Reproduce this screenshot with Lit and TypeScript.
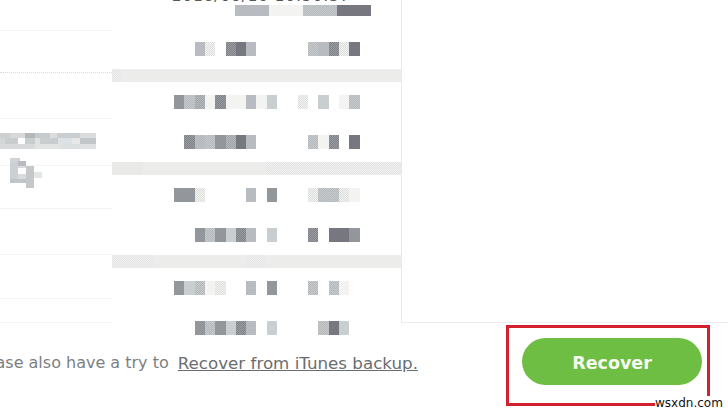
import { LitElement, html, css, svg } from "lit";
import { customElement } from "lit/decorators.js";

type Seg = [number, string];
const ORIGIN = 112;

/** Each list: [end x, shade] pairs, walking right from x=112. Empty shade leaves a gap. */
const ROWS: Seg[][] = [
  [[235, ""], [269, "a"], [303, "f"], [337, "g"], [371, "x"]],
  [[195, ""], [205, "a"], [215, "h"], [226, ""], [236, "k"], [246, "x"], [256, "a"], [308, ""], [318, "g"], [329, "a"], [339, "k"], [349, "h"], [360, "x"]],
  [[174, ""], [184, "d"], [195, "g"], [205, "c"], [215, "f"], [226, "k"], [236, "f"], [246, "f"], [256, "a"], [267, "f"], [277, "e"], [298, ""], [308, "h"], [318, ""], [329, "e"], [339, ""], [349, "f"], [360, "g"]],
  [[184, ""], [195, "k"], [205, "a"], [215, "g"], [226, "d"], [236, "c"], [246, "x"], [256, "a"], [308, ""], [318, "g"], [329, "f"], [339, "k"], [349, ""], [360, "x"]],
  [[174, ""], [195, "d"], [205, "h"], [246, ""], [256, "a"], [267, ""], [277, "d"], [308, ""], [318, "h"], [329, "g"], [339, "g"], [349, "h"], [360, "f"]],
  [[195, ""], [205, "d"], [215, "g"], [226, "d"], [236, "e"], [246, "k"], [256, "a"], [267, ""], [277, "e"], [308, ""], [318, "k"], [329, ""], [349, "x"], [360, "d"]],
  [[174, ""], [184, "d"], [195, "e"], [205, "g"], [215, "f"], [226, "h"], [246, ""], [256, "a"], [267, ""], [277, "d"], [308, ""], [318, "g"], [329, ""], [339, "g"], [349, "f"]],
  [[195, ""], [205, "d"], [215, "g"], [226, "d"], [236, "e"], [246, "k"], [256, "a"], [267, ""], [277, "e"], [318, ""], [329, "g"], [339, "x"], [349, "e"]],
];

const BANDS: Seg[][] = [
  [[122, "n"], [401, "b"]],
  [[142, "m"], [266, "b"], [401, "n"]],
  [[153, "n"], [246, "b"], [265, "n"], [401, "b"]],
];

/** Row heights of the left list; each row ends in a hairline. */
const LEFT_ROWS = [31, 42, 46, 47, 43, 46, 44, 24];

const NAME_BLOCKS: [number, number, number, number, string][] = [
  [0, 133, 10, 5, "#ccd0d2"], [10, 133, 15, 5, "#d8d8d8"], [25, 133, 10, 5, "#b4b7bb"], [35, 133, 15, 5, "#c8cbce"],
  [50, 133, 7, 5, "#dcdcdc"], [57, 133, 23, 5, "#cbced0"], [80, 133, 16, 5, "#dadcdd"],
  [0, 138, 5, 6, "#d3d5d6"], [5, 138, 13, 6, "#c9cccd"], [18, 138, 7, 6, "#ffffff"], [25, 138, 10, 6, "#c9cccd"],
  [35, 138, 5, 6, "#e0e2dd"], [40, 138, 18, 6, "#cacdcf"], [58, 138, 14, 6, "#dbe1e4"], [72, 138, 8, 6, "#e6e8ea"], [80, 138, 16, 6, "#c2c6c9"],
  [0, 144, 35, 5, "#d8dadb"], [35, 144, 25, 5, "#e2e4e4"], [60, 144, 20, 5, "#dcdfe0"], [80, 144, 16, 5, "#dfe1e2"],
  [10, 158, 10, 5, "#d0d3d5"], [18, 161, 8, 5, "#b8bbbf"], [10, 163, 8, 17, "#cdd0d2"], [18, 166, 8, 2, "#d8dadc"],
  [18, 174, 8, 5, "#d8dadc"], [26, 166, 8, 22, "#c4c8cb"], [34, 172, 8, 6, "#e4e6e6"], [10, 179, 16, 4, "#c2c5c8"],
];

@customElement("seg-row")
class SegRow extends LitElement {
  static properties = { segs: { attribute: false } };
  segs: Seg[] = [];
  static styles = css`
    :host { display: flex; }
    i { display: block; height: 100%; flex: none; }
    .a { background: #b8bcc0; }
    .x { background: #76777f; }
    .d { background: #93979b; }
    .e { background: #c9ced1; }
    .f { background: #f3f4f2; }
    .b { background: #ecedeb; }
    .g { background: repeating-conic-gradient(#b4b8bb 0 25%, #c8cbcd 0 50%) 0 0 / 2px 2px; }
    .c { background: repeating-conic-gradient(#9fa3a7 0 25%, #b6babd 0 50%) 0 0 / 2px 2px; }
    .k { background: repeating-conic-gradient(#7f8186 0 25%, #9a9da1 0 50%) 0 0 / 2px 2px; }
    .h { background: repeating-conic-gradient(#dcdedc 0 25%, #f2f3f2 0 50%) 0 0 / 2px 2px; }
    .n { background: repeating-conic-gradient(#e2e3e2 0 25%, #f0f1f0 0 50%) 0 0 / 2px 2px; }
    .m { background: #e9eae8; }
  `;
  render() {
    let x = ORIGIN;
    return this.segs.map(([end, cls]) => {
      const w = end - x;
      x = end;
      return html`<i class=${cls} style="width:${w}px"></i>`;
    });
  }
}

@customElement("app-root")
export class AppRoot extends LitElement {
  static styles = css`
    :host {
      display: block;
      width: 728px;
      height: 415px;
      overflow: hidden;
      background: #fff;
      position: relative;
      font-family: "DejaVu Sans", sans-serif;
    }
    .main { display: flex; height: 323px; }
    .left { width: 112px; flex: none; position: relative; }
    .lrow { box-sizing: border-box; border-bottom: 1px solid #f2f4f5; }
    .lrow.dotted { border-bottom: 1px dotted #d9dadb; }
    .blur { position: absolute; left: 0; top: 0; width: 112px; height: 200px; }
    .mid { width: 289px; flex: none; display: flex; flex-direction: column; }
    .clip {
      height: 5px;
      flex: none;
      overflow: hidden;
      padding-left: 60px;
    }
    .clip span {
      display: block;
      margin-top: -12px;
      font-size: 15px;
      line-height: 16px;
      letter-spacing: 1.05px;
      color: #555;
      white-space: nowrap;
    }
    .r0 { height: 11px; flex: none; margin-bottom: 26px; }
    .r { height: 14px; flex: none; }
    .first { margin-top: 13px; margin-bottom: 26px; }
    .last { margin-bottom: 13px; }
    .tail { margin-bottom: 13px; }
    .band { height: 13px; flex: none; }
    .right {
      flex: 1;
      border-left: 1px solid #e8e9e9;
      border-bottom: 1px solid #eceded;
    }
    .foot { display: flex; height: 92px; }
    .msg {
      width: 506px;
      flex: none;
      box-sizing: border-box;
      padding: 28px 88px 0 0;
      display: flex;
      justify-content: flex-end;
      gap: 9px;
      white-space: nowrap;
      font-size: 16.7px;
      line-height: 24px;
      color: #7c7f82;
    }
    .msg span { font-size: 16px; }
    .msg a { color: #6a6d70; text-decoration: underline; }
    .mark {
      margin-top: 2px;
      width: 204px;
      height: 81px;
      box-sizing: border-box;
      border: 3px solid #d3202e;
      padding: 10px 5px 0 13px;
    }
    button {
      display: block;
      width: 180px;
      height: 47px;
      border: none;
      border-radius: 24px;
      background: #6fbe44;
      color: #f6faf2;
      font: bold 17.5px "DejaVu Sans", sans-serif;
      padding: 3px 0 0;
    }
    .wm {
      position: absolute;
      left: 655px;
      top: 396px;
      font: 12px/15px "DejaVu Sans", sans-serif;
      color: #111;
      background: #fff;
      white-space: nowrap;
    }
  `;

  render() {
    return html`
      <div class="main">
        <div class="left">
          ${LEFT_ROWS.map(
            (h, i) => html`<div class="lrow ${i === 1 ? "dotted" : ""}" style="height:${h}px"></div>`
          )}
          <svg class="blur" viewBox="0 0 112 200">
            ${NAME_BLOCKS.map(([x, by, w, h, c]) => svg`<rect x=${x} y=${by} width=${w} height=${h} fill=${c}></rect>`)}
          </svg>
        </div>
        <div class="mid">
          <div class="clip"><span>2018/08/16 16:30:37</span></div>
          <seg-row class="r0" .segs=${ROWS[0]}></seg-row>
          <seg-row class="r tail" .segs=${ROWS[1]}></seg-row>
          <seg-row class="band" .segs=${BANDS[0]}></seg-row>
          <seg-row class="r first" .segs=${ROWS[2]}></seg-row>
          <seg-row class="r last" .segs=${ROWS[3]}></seg-row>
          <seg-row class="band" .segs=${BANDS[1]}></seg-row>
          <seg-row class="r first" .segs=${ROWS[4]}></seg-row>
          <seg-row class="r last" .segs=${ROWS[5]}></seg-row>
          <seg-row class="band" .segs=${BANDS[2]}></seg-row>
          <seg-row class="r first" .segs=${ROWS[6]}></seg-row>
          <seg-row class="r last" .segs=${ROWS[7]}></seg-row>
        </div>
        <div class="right"></div>
      </div>
      <div class="foot">
        <div class="msg">
          <span>Please also have a try to</span>
          <a href="#">Recover from iTunes backup.</a>
        </div>
        <div class="mark"><button>Recover</button></div>
      </div>
      <div class="wm">wsxdn.com</div>
    `;
  }
}
